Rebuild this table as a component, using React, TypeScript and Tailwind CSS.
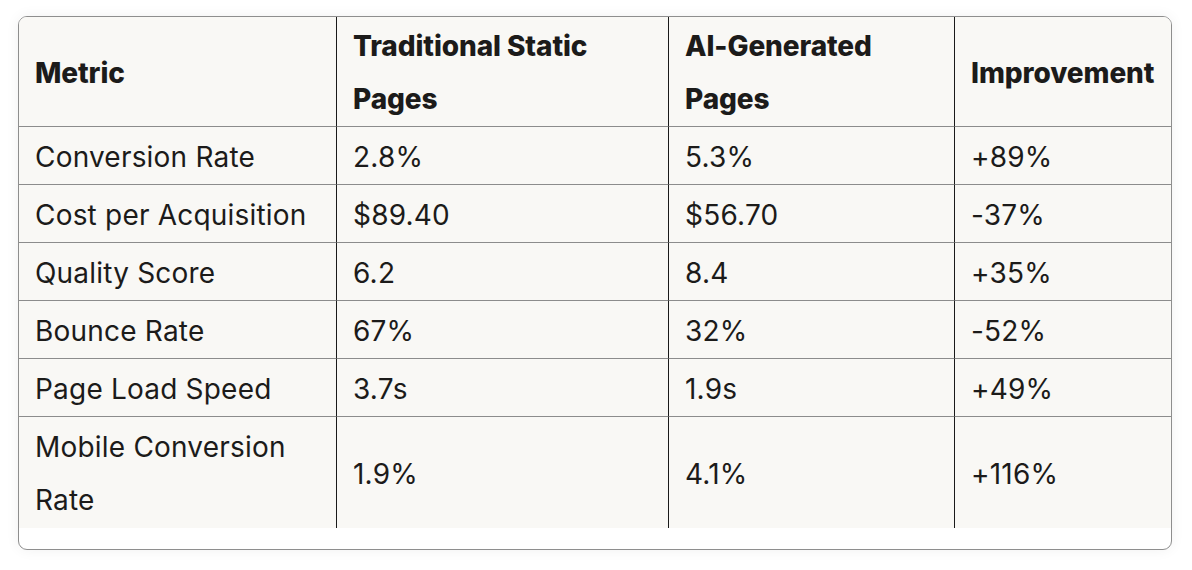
const headers = ["Metric", "Traditional Static Pages", "AI-Generated Pages", "Improvement"];

const rows: string[][] = [
  ["Conversion Rate", "2.8%", "5.3%", "+89%"],
  ["Cost per Acquisition", "$89.40", "$56.70", "-37%"],
  ["Quality Score", "6.2", "8.4", "+35%"],
  ["Bounce Rate", "67%", "32%", "-52%"],
  ["Page Load Speed", "3.7s", "1.9s", "+49%"],
  ["Mobile Conversion Rate", "1.9%", "4.1%", "+116%"],
];

const cellBase = "flex items-center px-[16px] pt-[3px] leading-[53px]";

export default function App() {
  return (
    <div className="min-h-[570px] bg-white pl-[18px] pt-[16px] font-['Inter',sans-serif] text-[28px] text-[#1c1b1a]">
      <div className="w-[1154px] overflow-hidden rounded-[9px] border border-[#8e8e8e] bg-white pb-[21px] shadow-[0_0_14px_rgba(0,0,0,0.06)]">
        <div className="grid grid-cols-[318px_332px_286px_216px] bg-[#f9f8f5]">
          {headers.map((h, i) => (
            <div
              key={h}
              className={`${cellBase} h-[110px] border-b border-[#8c8c8c] font-extrabold tracking-[-0.1px] ${
                i < 3 ? "border-r border-r-[#1a1a1a]" : ""
              }`}
            >
              <span>{h}</span>
            </div>
          ))}
          {rows.map((r, ri) =>
            r.map((c, ci) => (
              <div
                key={`${ri}-${ci}`}
                className={`${cellBase} tracking-[0.2px] ${
                  ri === rows.length - 1 ? "h-[111px]" : "h-[58px] border-b border-[#8c8c8c]"
                } ${ci < 3 ? "border-r border-r-[#1a1a1a]" : ""}`}
              >
                <span>{c}</span>
              </div>
            ))
          )}
        </div>
      </div>
    </div>
  );
}
